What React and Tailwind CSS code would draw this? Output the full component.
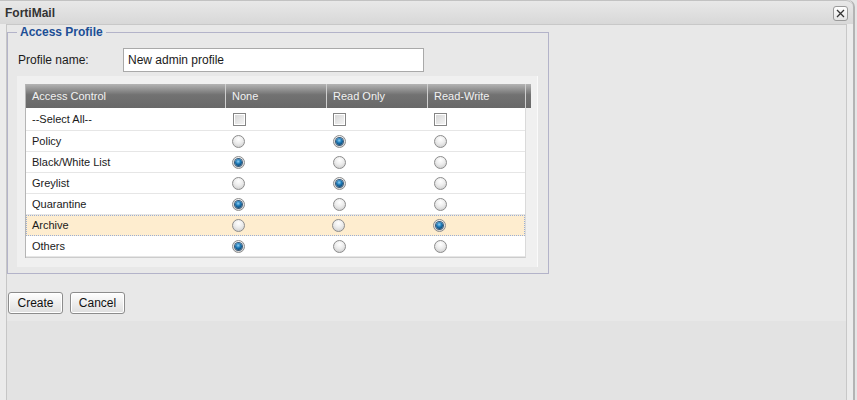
import React from "react";

function Radio({ on }) {
  return (
    <span className="inline-flex w-[13px] h-[13px] rounded-full border border-[#8c8c8c] items-center justify-center bg-[radial-gradient(circle_at_50%_30%,#ffffff_0%,#ececec_45%,#c6c6c6_100%)]">
      {on && (
        <span className="w-[7px] h-[7px] rounded-full bg-[radial-gradient(circle_at_45%_35%,#8fd0f5_0%,#1d7ab8_40%,#083a64_85%)] shadow-[0_0_0_1px_#3a5a78]" />
      )}
    </span>
  );
}

function Check() {
  return (
    <span className="inline-block w-[13px] h-[13px] border border-[#858585] bg-[linear-gradient(135deg,#d4d4d4,#f6f6f6)] shadow-[inset_0_0_0_1px_#ffffff]" />
  );
}

const rows = [
  ["Policy", 1],
  ["Black/White List", 0],
  ["Greylist", 1],
  ["Quarantine", 0],
  ["Archive", 2],
  ["Others", 0],
];

export default function App() {
  return (
    <div className="w-[857px] h-[400px] overflow-hidden bg-[#e6e6e6] font-['Liberation_Sans',Arial,sans-serif] text-[#1a1a1a]">
      <div className="w-[855px] h-full flex flex-col border-r-2 border-[#b4b4b4] rounded-tr-[7px] bg-[#ebebeb]">
        {/* title bar */}
        <div className="h-[24px] shrink-0 flex items-center justify-between pl-[5px] pr-[5px] border-t border-[#c2c2c2] rounded-tr-[7px] bg-[linear-gradient(to_bottom,#e8e8e8,#d8d8d8)]">
          <span className="text-[12px] font-bold text-[#333] leading-none">FortiMail</span>
          <span className="w-[15px] h-[15px] flex items-center justify-center border border-[#9a9a9a] rounded-[3px] bg-[linear-gradient(to_bottom,#ffffff,#e4e4e4)] mt-[2px]">
            <svg width="9" height="9" viewBox="0 0 9 9">
              <path d="M1 1 L8 8 M8 1 L1 8" stroke="#333" strokeWidth="1.3" />
            </svg>
          </span>
        </div>
        {/* body */}
        <div className="flex flex-1">
          <div className="w-[7px] shrink-0 bg-[#ebebeb] border-r border-[#c6c6c6]" />
          <div className="w-[840px] shrink-0 flex flex-col border-t border-r border-[#c8c8c8]">
            <div className="h-[296px] bg-[#e8e8e8]">
              <fieldset className="w-[542px] border border-[#b3b3c9] pb-[6px]">
                <legend className="ml-[9px] px-[3px] text-[12px] font-bold text-[#1d4f96] leading-[14px]">
                  Access Profile
                </legend>
                <div className="flex items-center pl-[10px] pt-[9px]">
                  <span className="w-[105px] text-[12px]">Profile name:</span>
                  <div className="w-[301px] h-[24px] border border-[#a9a9a9] bg-white flex items-center pl-[4px] text-[12px]">
                    New admin profile
                  </div>
                </div>
                <div className="ml-[9px] mt-[4px] w-[521px] h-[191px] bg-[#f0f0f0] border-r border-[#fafafa] pl-[8px] pt-[8px]">
                  <div className="w-[506px] border-l border-[#b5b5b5]">
                    <div className="flex h-[24px] text-[11px] text-[#f2f2f2] bg-[linear-gradient(to_bottom,#b4b4b4,#727272_45%,#686868)]">
                      <div className="w-[200px] border-r border-[#cfcfcf] pl-[6px] flex items-center">Access Control</div>
                      <div className="w-[101px] border-r border-[#cfcfcf] pl-[6px] flex items-center">None</div>
                      <div className="w-[101px] border-r border-[#cfcfcf] pl-[6px] flex items-center">Read Only</div>
                      <div className="w-[98px] border-r border-[#cfcfcf] pl-[6px] flex items-center">Read-Write</div>
                      <div className="w-[5px]" />
                    </div>
                    <div className="w-[500px] border-r border-[#dadada] bg-white text-[11px] border-b border-b-[#cccccc]">
                      <div className="flex h-[23px] items-center border-b border-[#e6e6e6]">
                        <div className="w-[200px] pl-[6px]">--Select All--</div>
                        <div className="w-[101px] pl-[7px] flex"><Check /></div>
                        <div className="w-[101px] pl-[7px] flex"><Check /></div>
                        <div className="w-[98px] pl-[7px] flex"><Check /></div>
                      </div>
                      {rows.map(([label, sel]) => {
                        const hi = label === "Archive";
                        return (
                          <div
                            key={label}
                            className={
                              hi
                                ? "flex h-[21px] items-center bg-[#feedcf] border border-dotted border-[#9aaed4]"
                                : "flex h-[21px] items-center border-b border-[#e6e6e6]"
                            }
                          >
                            <div className={hi ? "w-[199px] pl-[5px]" : "w-[200px] pl-[6px]"}>{label}</div>
                            <div className="w-[101px] pl-[6px] flex"><Radio on={sel === 0} /></div>
                            <div className="w-[101px] pl-[6px] flex"><Radio on={sel === 1} /></div>
                            <div className="w-[97px] pl-[6px] flex"><Radio on={sel === 2} /></div>
                          </div>
                        );
                      })}
                    </div>
                  </div>
                </div>
              </fieldset>
              <div className="flex gap-[7px] ml-[1px] mt-[18px]">
                <button className="w-[55px] h-[22px] border border-[#8c8c8c] rounded-[3px] bg-[linear-gradient(to_bottom,#fefefe,#dedede)] shadow-[inset_0_0_0_1px_#ffffff] text-[12px] text-[#111]">
                  Create
                </button>
                <button className="w-[55px] h-[22px] border border-[#8c8c8c] rounded-[3px] bg-[linear-gradient(to_bottom,#fefefe,#dedede)] shadow-[inset_0_0_0_1px_#ffffff] text-[12px] text-[#111]">
                  Cancel
                </button>
              </div>
            </div>
            <div className="flex-1 bg-[#e3e3e3]" />
          </div>
          <div className="flex-1 bg-[#ececec]" />
        </div>
      </div>
    </div>
  );
}
